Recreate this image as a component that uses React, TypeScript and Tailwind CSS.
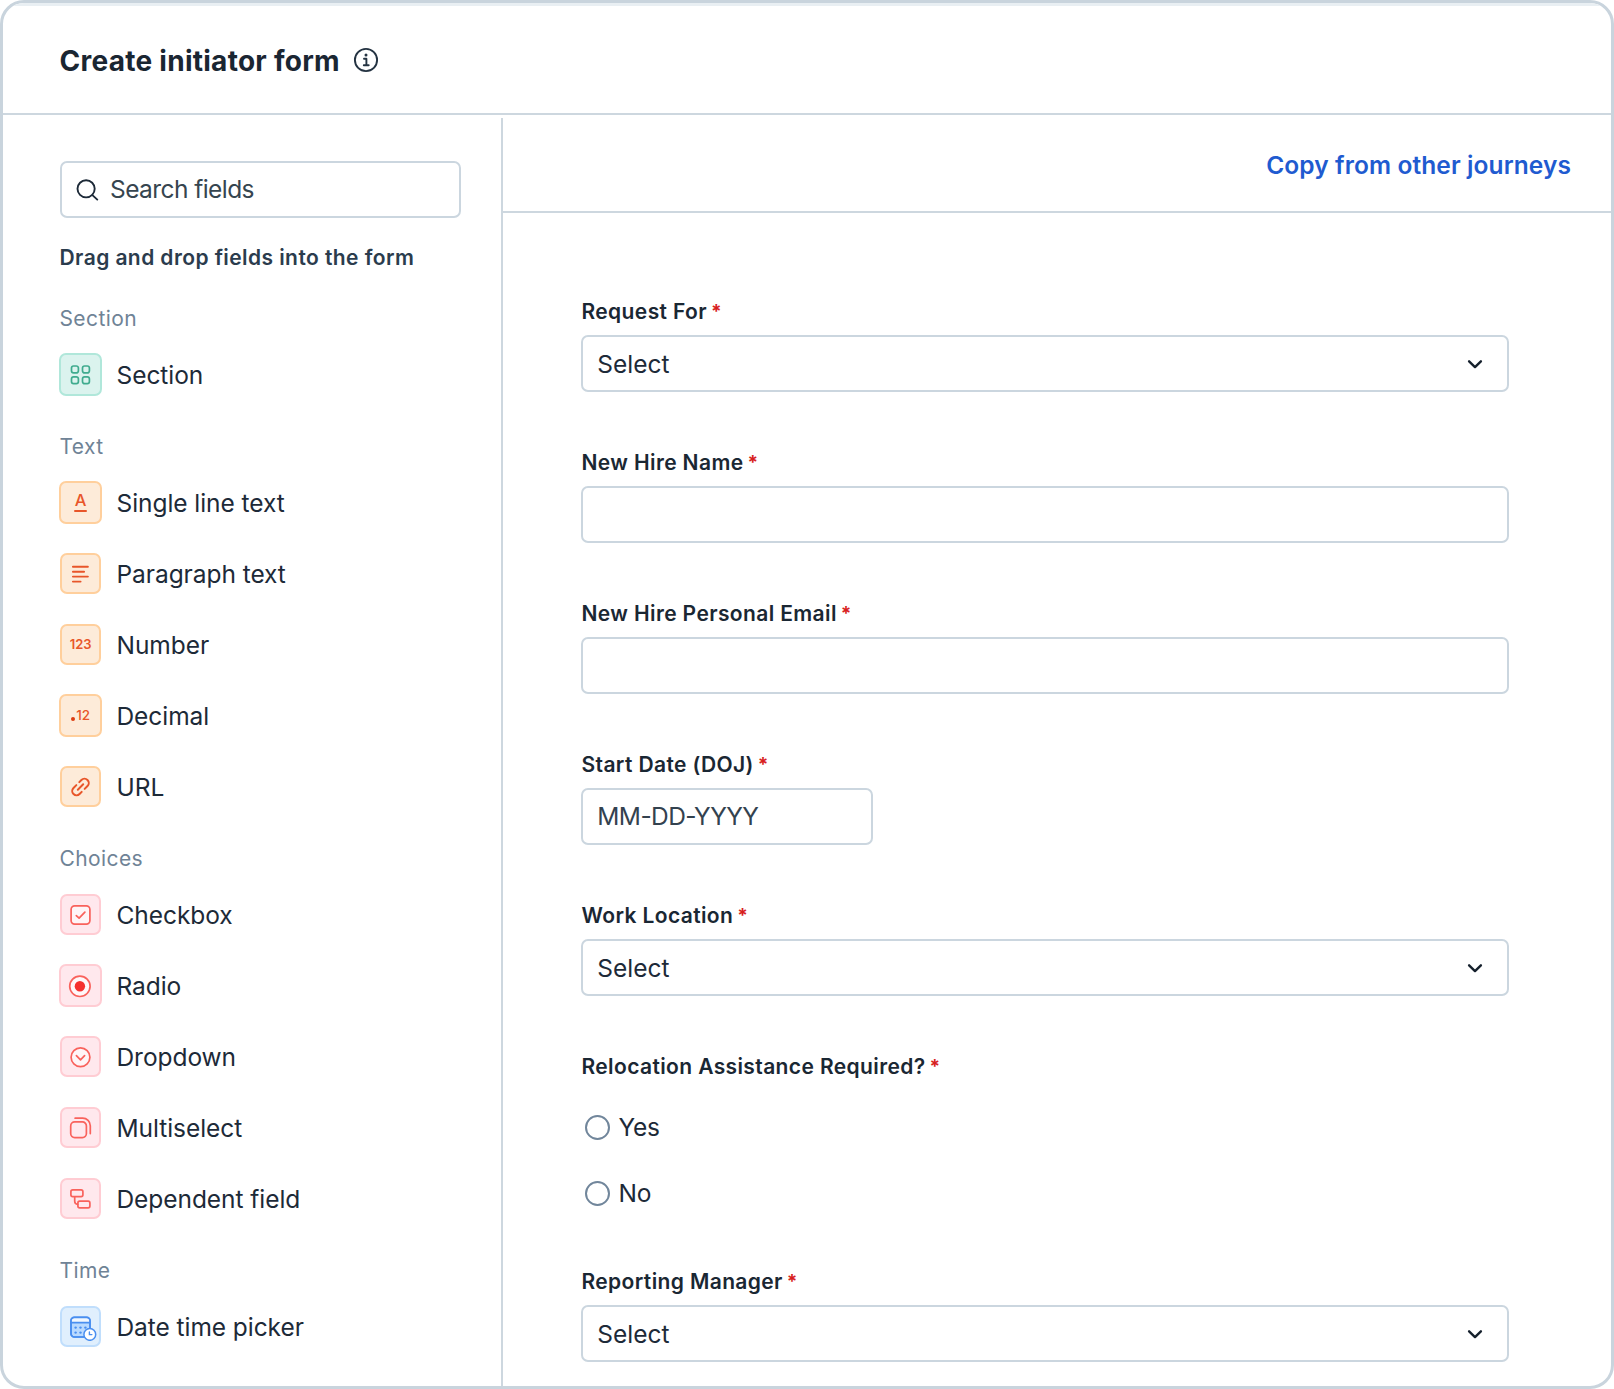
import type { ReactNode } from "react";

type Tone = "green" | "orange" | "pink" | "blue";

const TONES: Record<Tone, string> = {
  green: "border-[#b0e7da] bg-[#dbf3ee] text-[#3fab8e]",
  orange: "border-[#ffcf9c] bg-[#fdebd9] text-[#e8562a]",
  pink: "border-[#ffccd3] bg-[#ffe8ed] text-[#f9625c]",
  blue: "border-[#c0defc] bg-[#e0effd] text-[#4a8ff0]",
};

function Glyph({ children, width = 1.7 }: { children: ReactNode; width?: number }) {
  return (
    <svg
      className="h-7 w-7"
      viewBox="-14.5 -14 28 28"
      fill="none"
      stroke="currentColor"
      strokeWidth={width}
      strokeLinecap="round"
      strokeLinejoin="round"
    >
      {children}
    </svg>
  );
}

const sectionIcon = (
  <Glyph>
    <rect x="-9" y="-9" width="6.9" height="6.9" rx="2.1" />
    <rect x="2" y="-9" width="6.9" height="6.9" rx="2.1" />
    <rect x="-9" y="1.8" width="6.9" height="6.9" rx="2.1" />
    <rect x="2" y="1.8" width="6.9" height="6.9" rx="2.1" />
  </Glyph>
);

const singleLineIcon = (
  <span className="flex flex-col items-center pl-px">
    <span className="text-[16.5px] leading-[15px] font-medium">A</span>
    <span className="mt-[2px] h-[2px] w-[13px] rounded-full bg-current" />
  </span>
);

const paragraphIcon = (
  <Glyph width={1.9}>
    <path d="M-7.6 -7.3H7.4M-7.6 -2.3H3.6M-7.6 2.6H7.4M-7.6 7.6H0.1" />
  </Glyph>
);

const numberIcon = <span className="pl-px text-[13px] leading-none font-semibold">123</span>;

const decimalIcon = (
  <span className="flex items-center gap-px pt-px pl-px text-[13.5px] leading-none font-medium">
    <span className="mt-[5px] h-[4px] w-[4px] rounded-full bg-[#dd3d10]" />
    12
  </span>
);

const linkIcon = (
  <Glyph width={2}>
    <g transform="rotate(-45)">
      <path d="M-2.6 4.3H-5.6A4.3 4.3 0 0 1 -5.6 -4.3H-1.6" />
      <path d="M2.6 -4.3H5.6A4.3 4.3 0 0 1 5.6 4.3H1.6" />
      <path d="M-3.8 0H3.8" />
    </g>
  </Glyph>
);

const checkboxIcon = (
  <Glyph>
    <rect x="-9.4" y="-9.2" width="18.8" height="18.4" rx="3.6" fill="#fff5f7" />
    <path d="M-4.2 0.6L-1.4 3.2L4.4 -2.8" />
  </Glyph>
);

const radioIcon = (
  <Glyph>
    <circle cx="-0.6" cy="0.3" r="10.2" fill="#fff8f9" />
    <circle cx="-0.6" cy="0.3" r="5.2" fill="#f5322f" stroke="none" />
  </Glyph>
);

const dropdownIcon = (
  <Glyph>
    <circle cx="0" cy="0.2" r="9.4" fill="#fff5f7" />
    <path d="M-4.1 -1.4L0 2.8L4.1 -1.4" />
  </Glyph>
);

const multiselectIcon = (
  <Glyph>
    <rect x="-9.8" y="-6.1" width="15.7" height="15.7" rx="4" />
    <path d="M-5.4 -9.8H2.2A7.6 7.6 0 0 1 9.8 -2.2V5.6" />
  </Glyph>
);

const dependentIcon = (
  <Glyph>
    <rect x="-9.6" y="-9.1" width="12" height="6.7" rx="1.8" />
    <rect x="-2.6" y="2.2" width="12" height="6.7" rx="1.8" />
    <path d="M-5.8 -2.2V2.3A3.2 3.2 0 0 0 -2.8 5.4" />
  </Glyph>
);

const dateTimeIcon = (
  <svg className="h-7 w-9" viewBox="-18.5 -14 36 28" fill="none" stroke="currentColor" strokeWidth="1.7" strokeLinecap="round">
    <rect x="-9.5" y="-9.6" width="19" height="19.6" rx="3.4" fill="#b9daff" />
    <path d="M-9 -4.3V-6.2Q-9 -9 -6.2 -9H6.2Q9 -9 9 -6.2V-4.3Z" fill="#f2f8ff" stroke="none" />
    <rect x="-9.5" y="-9.6" width="19" height="19.6" rx="3.4" />
    <path d="M-9.5 -4.3H9.5" />
    <g fill="currentColor" stroke="none">
      <circle cx="-4.9" cy="0.6" r="1.2" />
      <circle cx="0" cy="0.6" r="1.2" />
      <circle cx="4.9" cy="0.6" r="1.2" />
      <circle cx="-4.9" cy="5.6" r="1.2" />
      <circle cx="0" cy="5.6" r="1.2" />
    </g>
    <circle cx="9.3" cy="7.4" r="5.9" fill="#fff" strokeWidth="1.5" />
    <path d="M8.9 4.9V7.6H11.4" strokeWidth="1.4" />
  </svg>
);

const GROUPS: { title: string; tone: Tone; items: [string, ReactNode, boolean?][] }[] = [
  { title: "Section", tone: "green", items: [["Section", sectionIcon, true]] },
  {
    title: "Text",
    tone: "orange",
    items: [
      ["Single line text", singleLineIcon, true],
      ["Paragraph text", paragraphIcon],
      ["Number", numberIcon],
      ["Decimal", decimalIcon, true],
      ["URL", linkIcon],
    ],
  },
  {
    title: "Choices",
    tone: "pink",
    items: [
      ["Checkbox", checkboxIcon],
      ["Radio", radioIcon, true],
      ["Dropdown", dropdownIcon],
      ["Multiselect", multiselectIcon],
      ["Dependent field", dependentIcon],
    ],
  },
  { title: "Time", tone: "blue", items: [["Date time picker", dateTimeIcon]] },
];

function FieldLabel({ children }: { children: ReactNode }) {
  return (
    <div className="flex h-7 items-center gap-[4px] pl-[0.5px] text-[21px] font-semibold tracking-[0.38px] text-[#1a2733]">
      <span>{children}</span>
      <span className="text-[19px] font-bold text-[#d81f1f]">*</span>
    </div>
  );
}

function Field({ label, kind }: { label: string; kind: "select" | "input" | "date" }) {
  return (
    <div className="mb-[57px]">
      <FieldLabel>{label}</FieldLabel>
      <div
        className={
          "mt-[9px] flex h-[57px] items-center justify-between rounded-[7px] border-2 border-[#cbd6df] pl-[14.3px] text-[24.5px] " +
          (kind === "date" ? "w-[292px]" : "w-full")
        }
      >
        {kind === "select" && (
          <>
            <span className="pt-px text-[#1d2a38]">Select</span>
            <svg className="mr-5 h-6 w-6" viewBox="0 0 24 24" fill="none" stroke="#15202c" strokeWidth="2.4" strokeLinecap="round" strokeLinejoin="round">
              <path d="M6.1 9.3L12 15.1L17.9 9.3" />
            </svg>
          </>
        )}
        {kind === "date" && <span className="tracking-[-0.57px] text-[#33424f]">MM-DD-YYYY</span>}
      </div>
    </div>
  );
}

function RadioOption({ label }: { label: string }) {
  return (
    <div className="flex h-9 items-center pl-[3.5px]">
      <span className="h-[25px] w-[25px] rounded-full border-2 border-[#71869b]" />
      <span className="ml-[9px] text-[24.5px] tracking-[-0.3px] text-[#1d2a38]">{label}</span>
    </div>
  );
}

export default function App() {
  return (
    <div className="flex h-[1389px] w-[1614px] flex-col overflow-hidden rounded-[24px] border-[3px] border-[#c9d4dd] bg-white font-['Inter',sans-serif]">
      <header className="flex h-[112px] shrink-0 items-center border-t-[3px] border-b-2 border-t-[#e9eff3] border-b-[#cdd7df] pt-px pl-[56.5px]">
        <h1 className="pt-px text-[28px] font-bold tracking-[0.27px] text-[#1a2632]">Create initiator form</h1>
        <svg className="ml-[13px] h-[26px] w-[26px]" viewBox="-13 -13 26 26" fill="none" stroke="#243342" strokeWidth="1.9" strokeLinecap="round">
          <circle r="11.1" />
          <path d="M-2 -1.2H0.4V5.2M-2.2 5.2H2.7" strokeLinejoin="round" />
          <circle cx="0" cy="-5" r="1.5" fill="#243342" stroke="none" />
        </svg>
      </header>

      <div className="flex min-h-0 flex-1">
        <aside className="w-[498px] shrink-0 pt-[46px] pr-[40px] pl-[56.5px]">
          <div className="flex h-[57px] items-center rounded-[7px] border-2 border-[#cbd6df] pl-[13.5px]">
            <svg className="h-6 w-6" viewBox="0 0 24 24" fill="none" stroke="#1d2a38" strokeWidth="1.9" strokeLinecap="round">
              <circle cx="11.1" cy="10.8" r="8.6" />
              <path d="M17.4 17.1L22.3 21.6" />
            </svg>
            <span className="ml-[11px] text-[24.5px] tracking-[-0.57px] text-[#36454f]">Search fields</span>
          </div>
          <p className="mt-[26px] h-7 text-[21px] leading-7 font-semibold tracking-[0.42px] whitespace-nowrap text-[#2b3c4d]">
            Drag and drop fields into the form
          </p>
          <div className="mt-[26px] flex flex-col gap-[16px]">
            {GROUPS.map((group) => (
              <section key={group.title}>
                <h2 className="flex h-[41px] items-center text-[21px] tracking-[0.4px] text-[#6f8396]">{group.title}</h2>
                {group.items.map(([label, icon, large]) => (
                  <div key={label} className="-ml-[0.8px] flex h-[71px] items-center">
                    <div className="flex w-[43px] shrink-0 justify-center">
                      <div
                        className={
                          "flex shrink-0 items-center justify-center rounded-[7px] border-2 " +
                          (large ? "h-[43px] w-[43px] " : "h-[41px] w-[41px] ") +
                          TONES[group.tone]
                        }
                      >
                        {icon}
                      </div>
                    </div>
                    <span className="ml-[14.8px] pt-px text-[24.5px] tracking-[-0.06px] whitespace-nowrap text-[#1d2a38]">{label}</span>
                  </div>
                ))}
              </section>
            ))}
          </div>
        </aside>

        <main className="mt-[3px] min-w-0 flex-1 overflow-hidden border-l-2 border-[#cdd7df]">
          <div className="flex h-[95px] items-center justify-end border-b-2 border-[#cdd7df] pt-px pr-[40px]">
            <a className="text-[24.5px] font-semibold tracking-[0.1px] text-[#1f5bd0]">Copy from other journeys</a>
          </div>
          <div className="pt-[85px] pr-[102px] pl-[78px]">
            <Field label="Request For" kind="select" />
            <Field label="New Hire Name" kind="input" />
            <Field label="New Hire Personal Email" kind="input" />
            <Field label="Start Date (DOJ)" kind="date" />
            <Field label="Work Location" kind="select" />
            <div className="mb-[57px]">
              <FieldLabel>Relocation Assistance Required?</FieldLabel>
              <div className="mt-7 flex flex-col gap-[30px]">
                <RadioOption label="Yes" />
                <RadioOption label="No" />
              </div>
            </div>
            <Field label="Reporting Manager" kind="select" />
          </div>
        </main>
      </div>
    </div>
  );
}
